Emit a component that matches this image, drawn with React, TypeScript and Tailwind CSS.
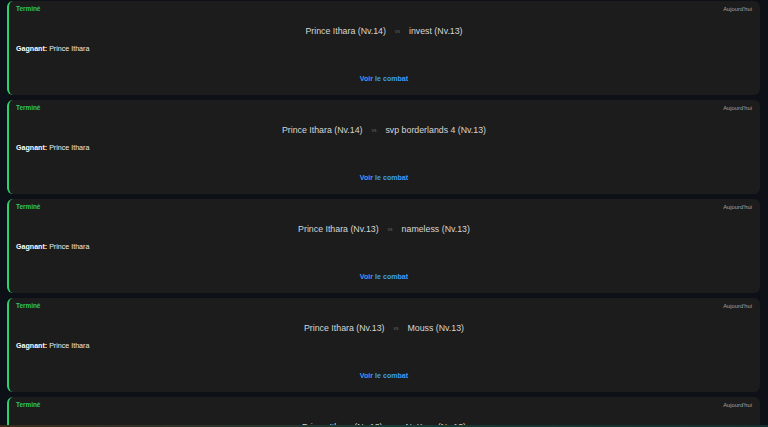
const fights = [
  { a: "Prince Ithara (Nv.14)", b: "invest (Nv.13)" },
  { a: "Prince Ithara (Nv.14)", b: "svp borderlands 4 (Nv.13)" },
  { a: "Prince Ithara (Nv.13)", b: "nameless (Nv.13)" },
  { a: "Prince Ithara (Nv.13)", b: "Mouss (Nv.13)" },
  { a: "Prince Ithara (Nv.13)", b: "NuKaro (Nv.13)" },
];

function FightCard({ a, b }: { a: string; b: string }) {
  return (
    <div className="rounded-md border-l-2 border-[#2fd26a] bg-[#1c1c1c] pl-[7px] pr-2 pt-[3px] pb-[11px]">
      <div className="flex h-[10px] items-center justify-between">
        <span className="text-[6.4px] font-bold text-[#2fc763]">Terminé</span>
        <span className="text-[5.8px] text-[#a3a3a3]">Aujourd'hui</span>
      </div>
      <div className="mt-[11px] flex h-[14px] items-center justify-center gap-[9px] text-[8.8px] text-[#d6d6d6]">
        <span>{a}</span>
        <span className="text-[5px] text-[#666666]">vs</span>
        <span>{b}</span>
      </div>
      <div className="mt-[5px] flex h-[10px] items-center text-[7.1px] text-[#ececec]">
        <span className="mr-[2px] font-bold text-white">Gagnant:</span>
        <span>Prince Ithara</span>
      </div>
      <div className="mt-[20px] flex h-[10px] items-center justify-center">
        <span className="text-[7.1px] font-bold text-[#3d9cf5]">Voir le combat</span>
      </div>
    </div>
  );
}

export default function App() {
  return (
    <div
      className="min-h-screen bg-[#0d1117] pl-[7px] pr-[8px] pt-[1px]"
      style={{ fontFamily: '"Liberation Sans", Arial, sans-serif' }}
    >
      <div className="flex flex-col gap-[5px]">
        {fights.map((f, i) => (
          <FightCard key={i} a={f.a} b={f.b} />
        ))}
      </div>
      <div className="fixed bottom-0 left-0 right-0 h-[2px] bg-gradient-to-r from-[#3a2c1c] via-[#153a34] to-[#14302e]" />
    </div>
  );
}
